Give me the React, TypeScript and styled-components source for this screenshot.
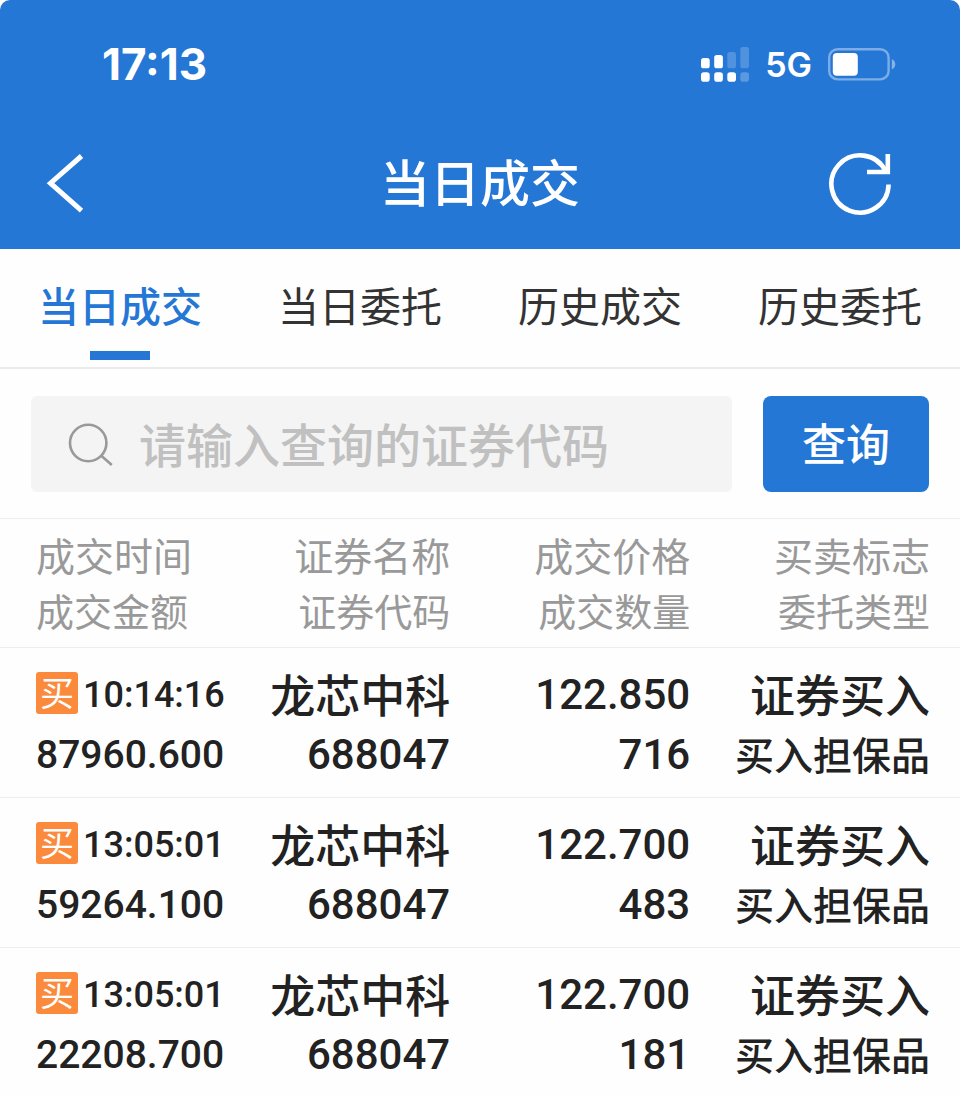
import React, { useState } from "react";
import styled, { createGlobalStyle } from "styled-components";

const BLUE = "#2577d5";
const CJK = '"Noto Sans CJK SC", sans-serif';
const DIGITS = 'Roboto, "Noto Sans CJK SC", sans-serif';

const GlobalStyle = createGlobalStyle`
  *, *::before, *::after { box-sizing: border-box; }
  body {
    margin: 0;
    background: #fefefe;
    color: #222;
    font-family: ${CJK};
  }
  button, input { font-family: inherit; }
`;

const Page = styled.main`
  width: 100%;
`;

const Header = styled.header`
  background: ${BLUE};
  color: #fff;
  border-radius: 10px 10px 0 0;
`;

const StatusBar = styled.div`
  display: flex;
  align-items: center;
  justify-content: space-between;
  height: 120px;
  padding: 8px 64px 0 102px;
  font-family: Inter, sans-serif;
`;

const Clock = styled.time`
  font-size: 44px;
  font-weight: 700;
  line-height: 48px;
`;

const StatusIcons = styled.div`
  display: flex;
  align-items: center;
  gap: 16px;
`;

const Network = styled.span`
  padding-top: 2px;
  font-size: 34px;
  font-weight: 600;
  line-height: 40px;
`;

const NavBar = styled.nav`
  display: grid;
  grid-template-columns: 1fr auto 1fr;
  align-items: center;
  height: 129px;
  padding: 0 46px 2px;
`;

const Title = styled.h1`
  margin: 0;
  padding-bottom: 8px;
  font-size: 50px;
  font-weight: 500;
  line-height: 72px;
`;

const IconButton = styled.button<{ $end?: boolean }>`
  display: flex;
  justify-self: ${(p) => (p.$end ? "end" : "start")};
  padding: 0 ${(p) => (p.$end ? "22px" : "0")} 0 0;
  border: 0;
  background: none;
  color: inherit;
  cursor: pointer;
`;

const Tabs = styled.div`
  display: grid;
  grid-template-columns: repeat(4, 1fr);
  border-bottom: 2px solid #ebebeb;
`;

const Tab = styled.button<{ $active: boolean }>`
  display: flex;
  flex-direction: column;
  align-items: center;
  gap: 15px;
  padding: 23px 0 7px;
  border: 0;
  background: none;
  color: ${(p) => (p.$active ? BLUE : "#333")};
  font-size: 41px;
  font-weight: ${(p) => (p.$active ? 500 : 400)};
  line-height: 64px;
  white-space: nowrap;
  cursor: pointer;

  &::after {
    content: "";
    width: 60px;
    height: 9px;
    background: ${(p) => (p.$active ? BLUE : "transparent")};
  }
`;

const SearchForm = styled.form`
  display: flex;
  gap: 31px;
  padding: 27px 31px 26px;
  border-bottom: 1px solid #eee;
`;

const SearchField = styled.label`
  display: flex;
  flex: 1;
  align-items: center;
  gap: 24px;
  min-width: 0;
  height: 96px;
  padding: 0 36px;
  border-radius: 6px;
  background: #f4f4f4;
  color: #999;
`;

const SearchInput = styled.input`
  flex: 1;
  min-width: 0;
  height: 76px;
  padding: 0 0 4px;
  border: 0;
  outline: 0;
  background: none;
  color: #222;
  font-size: 47px;
  font-weight: 500;

  &::placeholder {
    color: #c0c0c0;
    opacity: 1;
  }
`;

const SearchButton = styled.button`
  width: 166px;
  height: 96px;
  padding: 0 0 4px;
  border: 0;
  border-radius: 8px;
  background: ${BLUE};
  color: #fff;
  font-size: 44px;
  font-weight: 500;
  cursor: pointer;
`;

const TradeTable = styled.table`
  width: 100%;
  table-layout: fixed;
  border-collapse: separate;
  border-spacing: 0;
`;

const Column = styled.col<{ $share: number }>`
  width: ${(p) => p.$share}%;
`;

const HeadCell = styled.th`
  padding: 8px 1px 10px 0;
  border-bottom: 1px solid #eee;
  color: #999;
  font-weight: 400;
  text-align: right;
  white-space: nowrap;

  &:first-child { padding-left: 36px; text-align: left; }
  &:last-child { padding-right: 30px; }
`;

const HeadLine = styled.div<{ $size: number }>`
  font-size: ${(p) => p.$size}px;
  line-height: 55px;
`;

const Cell = styled.td`
  padding: 17px 1px 12px 0;
  border-bottom: 1px solid #eee;
  font-weight: 500;
  text-align: right;
  white-space: nowrap;

  &:first-child { padding-left: 36px; text-align: left; }
  &:last-child { padding-right: 30px; }
  tr:last-child > & { border-bottom: 0; }
`;

const TextLine = styled.div<{ $size: number }>`
  height: 60px;
  font-size: ${(p) => p.$size}px;
  line-height: 57px;
`;

const NumberLine = styled.div<{ $size: number }>`
  font-family: ${DIGITS};
  font-size: ${(p) => p.$size}px;
  line-height: 60px;
`;

const TimeLine = styled(NumberLine)`
  display: flex;
  align-items: center;
  gap: 5px;
`;

const SideBadge = styled.span`
  height: 42px;
  width: 42px;
  margin-bottom: 4px;
  border-radius: 3px;
  background: #fb8a3c;
  color: #fff;
  font-family: ${CJK};
  font-size: 34px;
  font-weight: 400;
  line-height: 40px;
  text-align: center;
`;

const SignalIcon = () => (
  <svg width="48" height="35" viewBox="0 0 48 35" fill="#fff" aria-hidden="true">
    <rect x="0" y="11" width="8.7" height="10.3" rx="2.6" />
    <rect x="13.2" y="8" width="8.7" height="13.3" rx="2.6" />
    <rect x="26.3" y="5" width="8.7" height="16.3" rx="2.6" opacity="0.2" />
    <rect x="39.3" y="0" width="8.7" height="21.3" rx="2.6" opacity="0.2" />
    <rect x="0" y="25.3" width="8.7" height="9.4" rx="2.8" />
    <rect x="13.2" y="25.3" width="8.7" height="9.4" rx="2.8" />
    <rect x="26.3" y="25.3" width="8.7" height="9.4" rx="2.8" />
    <rect x="39.3" y="25.3" width="8.7" height="9.4" rx="2.8" opacity="0.25" />
  </svg>
);

const BatteryIcon = () => (
  <svg width="68" height="33" viewBox="0 0 68 33" aria-hidden="true">
    <rect x="1.2" y="1.2" width="59.4" height="30.2" rx="8.5" fill="none" stroke="#fff" strokeOpacity="0.4" strokeWidth="2.4" />
    <rect x="4.8" y="5" width="25" height="22.8" rx="4" fill="#fff" />
    <path d="M63.8 11.2c4.6 1.6 4.6 8.6 0 10.2z" fill="#fff" fillOpacity="0.45" />
  </svg>
);

const BackIcon = () => (
  <svg width="40" height="60" viewBox="0 0 40 60" fill="none" stroke="currentColor" strokeWidth="5" aria-hidden="true">
    <path d="M35.5 2 4.5 29.2l31 27.4" />
  </svg>
);

const RefreshIcon = () => (
  <svg width="64" height="64" viewBox="0 0 64 64" fill="none" stroke="currentColor" strokeWidth="4.6" aria-hidden="true">
    <path d="M60.6 32.5A28.6 28.6 0 1 1 57.5 19" />
    <path d="M59.8 2v18H39" />
  </svg>
);

const SearchIcon = () => (
  <svg width="48" height="48" viewBox="0 0 48 48" fill="none" stroke="currentColor" strokeWidth="2.6" aria-hidden="true">
    <circle cx="21.2" cy="23" r="18.2" />
    <path d="M34 35.5l10.8 9.4" />
  </svg>
);

const TABS = ["当日成交", "当日委托", "历史成交", "历史委托"];

const COLUMNS = [
  { top: "成交时间", bottom: "成交金额", share: 25 },
  { top: "证券名称", bottom: "证券代码", share: 22 },
  { top: "成交价格", bottom: "成交数量", share: 25 },
  { top: "买卖标志", bottom: "委托类型", share: 28 },
];

const TRADES = [
  { time: "10:14:16", amount: "87960.600", price: "122.850", volume: "716" },
  { time: "13:05:01", amount: "59264.100", price: "122.700", volume: "483" },
  { time: "13:05:01", amount: "22208.700", price: "122.700", volume: "181" },
];

export default function App() {
  const [active, setActive] = useState(0);
  const [query, setQuery] = useState("");

  return (
    <Page>
      <GlobalStyle />
      <Header>
        <StatusBar>
          <Clock>17:13</Clock>
          <StatusIcons>
            <SignalIcon />
            <Network>5G</Network>
            <BatteryIcon />
          </StatusIcons>
        </StatusBar>
        <NavBar>
          <IconButton type="button" aria-label="返回">
            <BackIcon />
          </IconButton>
          <Title>当日成交</Title>
          <IconButton type="button" aria-label="刷新" $end>
            <RefreshIcon />
          </IconButton>
        </NavBar>
      </Header>

      <Tabs role="tablist">
        {TABS.map((label, i) => (
          <Tab
            key={label}
            type="button"
            role="tab"
            aria-selected={i === active}
            $active={i === active}
            onClick={() => setActive(i)}
          >
            {label}
          </Tab>
        ))}
      </Tabs>

      <SearchForm onSubmit={(e) => e.preventDefault()}>
        <SearchField>
          <SearchIcon />
          <SearchInput
            type="text"
            aria-label="证券代码"
            placeholder="请输入查询的证券代码"
            value={query}
            onChange={(e) => setQuery(e.target.value)}
          />
        </SearchField>
        <SearchButton type="submit">查询</SearchButton>
      </SearchForm>

      <TradeTable>
        <colgroup>
          {COLUMNS.map((c) => (
            <Column key={c.top} $share={c.share} />
          ))}
        </colgroup>
        <thead>
          <tr>
            {COLUMNS.map((c) => (
              <HeadCell key={c.top} scope="col">
                <HeadLine $size={39}>{c.top}</HeadLine>
                <HeadLine $size={38}>{c.bottom}</HeadLine>
              </HeadCell>
            ))}
          </tr>
        </thead>
        <tbody>
          {TRADES.map((t, i) => (
            <tr key={i}>
              <Cell>
                <TimeLine $size={36}>
                  <SideBadge>买</SideBadge>
                  <time>{t.time}</time>
                </TimeLine>
                <NumberLine $size={39}>{t.amount}</NumberLine>
              </Cell>
              <Cell>
                <TextLine $size={45}>龙芯中科</TextLine>
                <NumberLine $size={42}>688047</NumberLine>
              </Cell>
              <Cell>
                <NumberLine $size={42}>{t.price}</NumberLine>
                <NumberLine $size={42}>{t.volume}</NumberLine>
              </Cell>
              <Cell>
                <TextLine $size={45}>证券买入</TextLine>
                <TextLine $size={39}>买入担保品</TextLine>
              </Cell>
            </tr>
          ))}
        </tbody>
      </TradeTable>
    </Page>
  );
}
